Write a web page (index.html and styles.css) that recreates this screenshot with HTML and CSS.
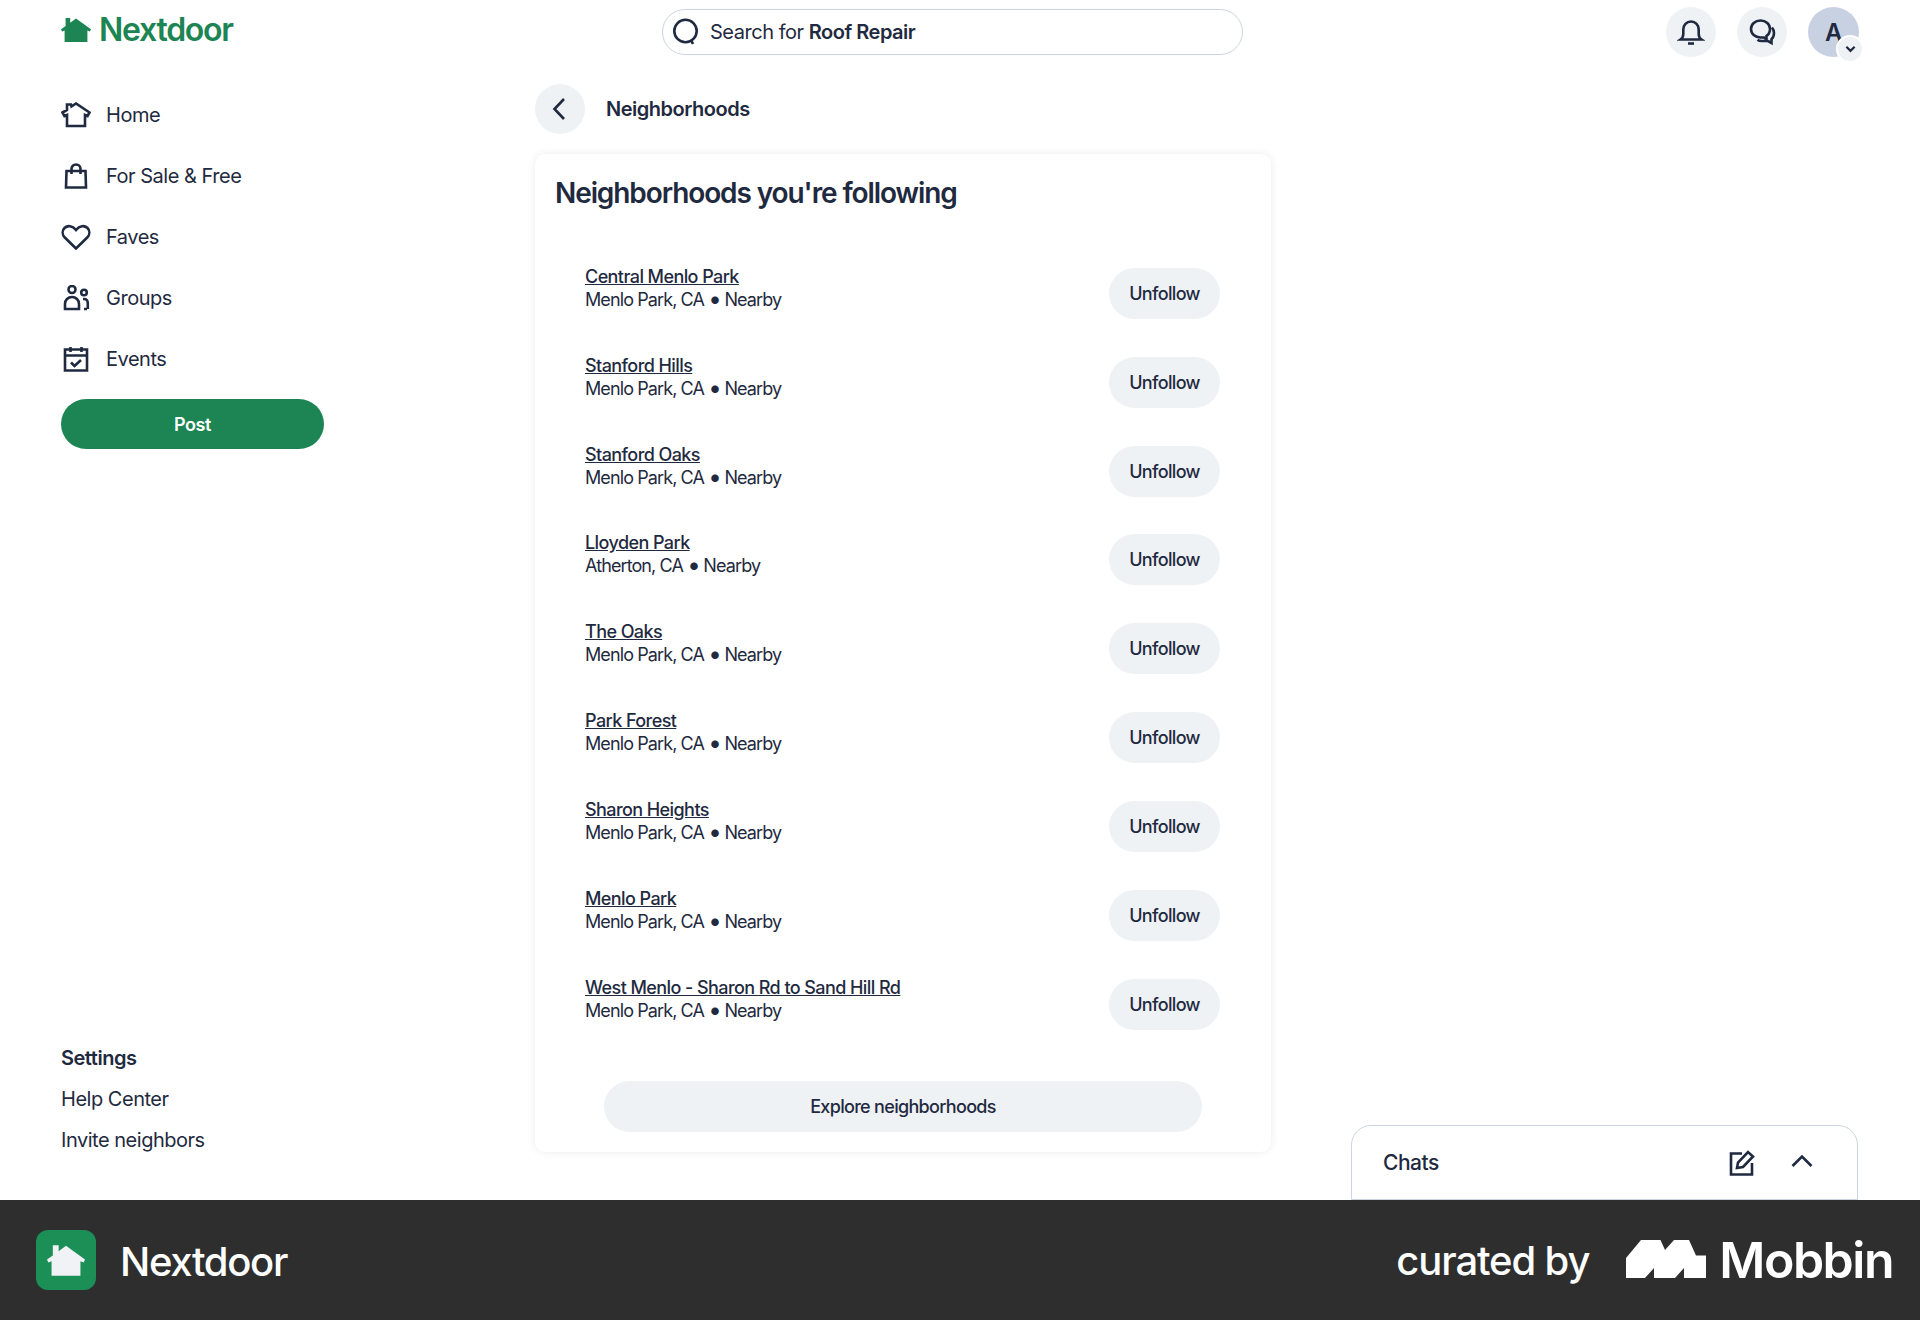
FILE: index.html
```html
<!DOCTYPE html>
<html lang="en">
<head>
<meta charset="utf-8">
<title>Nextdoor - Neighborhoods</title>
<link rel="stylesheet" href="styles.css">
</head>
<body>
<div class="app">
  <header class="topbar">
    <a class="logo">
      <svg class="logo-mark" viewBox="0 0 30 24"><path d="M0 11.200 4.600 8V0h4.600v4.700L15 .4 30 11.200l-1 2.300-2.600-1V24H3.600V12.500L1 13.500z"/></svg>
      <span>Nextdoor</span>
    </a>
    <div class="search">
      <svg class="search-icon" viewBox="0 0 28 28"><circle cx="13.500" cy="13" r="11.200"/><path d="m19 22 2 4"/></svg>
      <span>Search for <b>Roof Repair</b></span>
    </div>
    <div class="actions">
      <button class="round"><svg viewBox="0 0 28 28"><path d="M3.500 21.500c2-1.400 2.800-3 2.800-5.500v-4.500C6.300 6.900 9.500 3.500 14 3.500s7.700 3.400 7.700 8V16c0 2.500.8 4.100 2.800 5.500z"/><path d="M11 25.500h6"/></svg></button>
      <button class="round"><svg viewBox="0 0 28 28"><path d="M12.500 2.500C7 2.500 3 6.300 3 11s4 8.500 9.500 8.500H16l2.500 2v-3.600c2.200-1.500 3.500-4 3.500-6.900 0-4.700-4-8.500-9.500-8.500z"/><path d="M24 9.500c1.500 1.800 2 3.500 2 5.500 0 2.700-1 4.900-2.500 6.300v3.700l-3.500-2h-6.500c-1.500 0-3-.5-4-1.300"/></svg></button>
      <div class="avatar">A
        <span class="avatar-badge"><svg viewBox="0 0 12 8"><path d="m1.500 1.500 4.500 4.500 4.500-4.500"/></svg></span>
      </div>
    </div>
  </header>

  <div class="columns">
    <aside class="sidebar">
      <nav class="nav">
        <a class="nav-item"><svg viewBox="0 0 30 26"><path d="M1.500 10.500 6 8V2.500h4l.5 2L15 1.500l13.500 9-2 3.500-2.500-1v11H6v-11l-2.500 1z"/></svg>Home</a>
        <a class="nav-item"><svg viewBox="0 0 30 26"><path d="M5 24.500 5.500 8h19l.5 16.500z"/><path d="M10.500 11V6c0-2.800 2-4.500 4.500-4.500s4.500 1.700 4.500 4.500v5"/></svg>For Sale &amp; Free</a>
        <a class="nav-item"><svg viewBox="0 0 30 26"><path d="M15 24.500 3.800 13.500C1 10.500 1 6.500 3.500 4 6.500 1 11.500 1.500 15 6c3.500-4.500 8.500-5 11.500-2 2.500 2.500 2.500 6.500-.3 9.500z"/></svg>Faves</a>
        <a class="nav-item"><svg viewBox="0 0 30 26"><circle cx="11" cy="4.500" r="3.500"/><circle cx="23" cy="7.500" r="2.800"/><path d="M4 24v-5c0-4 3-7 7-7s7 3 7 7v5z"/><path d="M22 14h1c2.500 0 3.800 2 3.800 4.500V24M23 24h3"/></svg>Groups</a>
        <a class="nav-item"><svg viewBox="0 0 30 26"><path d="M4 3.500h22v21H4zM4 9.500h22M9.500 1v5M20.500 1v5"/><path d="m10 16.500 3.500 3.500 6.500-6"/></svg>Events</a>
      </nav>
      <button class="post">Post</button>
      <div class="side-links">
        <a class="settings">Settings</a>
        <a>Help Center</a>
        <a>Invite neighbors</a>
      </div>
    </aside>

    <main class="main">
      <div class="page-head">
        <button class="round back"><svg viewBox="0 0 28 28"><path d="m18 4-9.500 10 9.500 10"/></svg></button>
        <h2>Neighborhoods</h2>
      </div>
      <section class="card">
        <h1>Neighborhoods you're following</h1>
        <ul class="list">
          <li class="row"><div class="info"><a>Central Menlo Park</a><p>Menlo Park, CA <span class="dot">•</span> Nearby</p></div><button class="pill">Unfollow</button></li>
          <li class="row"><div class="info"><a>Stanford Hills</a><p>Menlo Park, CA <span class="dot">•</span> Nearby</p></div><button class="pill">Unfollow</button></li>
          <li class="row"><div class="info"><a>Stanford Oaks</a><p>Menlo Park, CA <span class="dot">•</span> Nearby</p></div><button class="pill">Unfollow</button></li>
          <li class="row"><div class="info"><a>Lloyden Park</a><p>Atherton, CA <span class="dot">•</span> Nearby</p></div><button class="pill">Unfollow</button></li>
          <li class="row"><div class="info"><a>The Oaks</a><p>Menlo Park, CA <span class="dot">•</span> Nearby</p></div><button class="pill">Unfollow</button></li>
          <li class="row"><div class="info"><a>Park Forest</a><p>Menlo Park, CA <span class="dot">•</span> Nearby</p></div><button class="pill">Unfollow</button></li>
          <li class="row"><div class="info"><a>Sharon Heights</a><p>Menlo Park, CA <span class="dot">•</span> Nearby</p></div><button class="pill">Unfollow</button></li>
          <li class="row"><div class="info"><a>Menlo Park</a><p>Menlo Park, CA <span class="dot">•</span> Nearby</p></div><button class="pill">Unfollow</button></li>
          <li class="row"><div class="info"><a>West Menlo - Sharon Rd to Sand Hill Rd</a><p>Menlo Park, CA <span class="dot">•</span> Nearby</p></div><button class="pill">Unfollow</button></li>
        </ul>
        <button class="pill explore">Explore neighborhoods</button>
      </section>
    </main>
  </div>

  <div class="chats">
    <span>Chats</span>
    <svg class="chat-edit" viewBox="0 0 26 26"><path d="M13 3.500H2v21h21V13"/><path d="m8 18 1-5.500L19 2l5 4.500L14 17z"/></svg>
    <svg class="chat-up" viewBox="0 0 22 14"><path d="m1.500 12 9.500-9.500 9.500 9.500"/></svg>
  </div>
</div>

<footer class="footer">
  <div class="brand">
    <span class="brand-icon"><svg viewBox="0 0 30 24"><path d="M0 11.200 4.600 8V0h4.600v4.700L15 .4 30 11.200l-1 2.300-2.600-1V24H3.600V12.500L1 13.500z"/></svg></span>
    <span class="brand-name">Nextdoor</span>
  </div>
  <div class="credit">
    <span class="curated">curated by</span>
    <svg class="mobbin-mark" viewBox="0 0 80 38"><path d="M0 38V18L15 0h19.500L39 10l9-10h15l7 15.500h10V38H58V28l-9 10H28V28l-9 10z"/></svg>
    <span class="mobbin">Mobbin</span>
  </div>
</footer>
</body>
</html>
```

FILE: styles.css
```css
* { box-sizing: border-box; }
html, body { margin: 0; padding: 0; }
body {
  width: 1920px;
  height: 1320px;
  overflow: hidden;
  background: #fff;
  color: #1f2a40;
  font-family: Inter, "Liberation Sans", sans-serif;
  letter-spacing: -0.03em;
}
a { color: inherit; text-decoration: none; }
button { font: inherit; letter-spacing: inherit; color: inherit; border: 0; cursor: pointer; }
h1, h2, p, ul { margin: 0; padding: 0; }
ul { list-style: none; }
svg { display: block; fill: none; stroke: currentColor; stroke-width: 2.6; }

.app { position: relative; height: 1200px; overflow: hidden; }

.topbar {
  display: grid;
  grid-template-columns: 662px 581px 1fr;
  height: 64px;
  align-items: start;
}
.logo {
  display: flex;
  align-items: center;
  gap: 8px;
  margin: 14px 0 0 61px;
  color: #1c8553;
  font-size: 32px;
  font-weight: 600;
  letter-spacing: -0.04em;
  line-height: 32px;
}
.logo-mark { width: 30px; height: 24px; fill: #1c8553; stroke: none; }

.search {
  display: flex;
  align-items: center;
  gap: 10px;
  height: 46px;
  margin-top: 9px;
  padding-left: 9px;
  border: 1.5px solid #cdd3e2;
  border-radius: 23px;
  font-size: 20px;
}
.search b { font-weight: 600; }
.search-icon { width: 28px; height: 28px; }

.actions {
  display: flex;
  justify-content: flex-end;
  gap: 21px;
  margin: 7px 61px 0 0;
}
.round {
  display: flex;
  align-items: center;
  justify-content: center;
  width: 50px;
  height: 50px;
  padding: 0;
  border-radius: 50%;
  background: #eff2f5;
}
.round svg { width: 28px; height: 28px; }
.avatar {
  position: relative;
  display: flex;
  align-items: center;
  justify-content: center;
  width: 51px;
  height: 50px;
  border-radius: 50%;
  background: #c8d1e2;
  font-size: 24px;
  font-weight: 600;
}
.avatar-badge {
  position: absolute;
  right: -5px;
  bottom: -6px;
  display: flex;
  align-items: center;
  justify-content: center;
  width: 28px;
  height: 28px;
  border-radius: 50%;
  background: #eff2f5;
  border: 2px solid #fff;
}
.avatar-badge svg { width: 11px; height: 8px; stroke-width: 2.4; }

.columns { display: flex; height: 1136px; }
.sidebar {
  display: flex;
  flex-direction: column;
  width: 535px;
  padding: 20px 0 47px 61px;
}
.nav { display: flex; flex-direction: column; }
.nav-item {
  display: flex;
  align-items: center;
  gap: 15px;
  height: 61px;
  font-size: 20px;
  font-weight: 400;
}
.nav-item svg { width: 30px; height: 26px; flex: none; }
.post {
  width: 263px;
  height: 50px;
  margin-top: 10px;
  border-radius: 25px;
  background: #1c8553;
  color: #fff;
  font-size: 18px;
  font-weight: 600;
}
.side-links {
  display: flex;
  flex-direction: column;
  gap: 16px;
  margin-top: auto;
  font-size: 20px;
  line-height: 25px;
}
.settings { font-weight: 600; }

.main { width: 736px; }
.page-head {
  display: flex;
  align-items: center;
  gap: 21px;
  height: 50px;
  margin: 20px 0;
}
.page-head h2 { font-size: 20px; font-weight: 600; }

.card {
  height: 998px;
  padding: 22px 20px 0;
  border-radius: 10px;
  background: #fff;
  box-shadow: 0 0 8px rgba(32, 44, 70, 0.09);
}
.card h1 { font-size: 28px; line-height: 34px; font-weight: 600; letter-spacing: -0.039em; }
.list { margin-top: 39px; }
.row {
  display: flex;
  align-items: center;
  justify-content: space-between;
  height: 88.85px;
  padding: 0 31px 0 30px;
  font-size: 18px;
  line-height: 23px;
}
.info { margin-bottom: 11px; }
.row a { font-weight: 500; text-decoration: underline; letter-spacing: -0.032em; }
.row p { letter-spacing: -0.05em; }
.dot { font-size: 24px; line-height: 0; letter-spacing: -0.06em; vertical-align: -1px; }
.pill {
  width: 111px;
  height: 51px;
  padding: 0;
  border-radius: 26px;
  background: #eff2f5;
  font-size: 18px;
  font-weight: 500;
  letter-spacing: -0.037em;
}
.explore {
  display: block;
  width: 598px;
  margin: 32px auto 0 49px;
  letter-spacing: -0.038em;
}

.chats {
  position: absolute;
  left: 1351px;
  top: 1125px;
  display: flex;
  align-items: center;
  width: 507px;
  height: 75px;
  padding: 0 44px 0 31px;
  border: 1.5px solid #cdd3e2;
  border-radius: 20px 20px 0 0;
  background: #fff;
  font-size: 21px;
  font-weight: 500;
}
.chats span { margin-right: auto; }
.chat-edit { width: 26px; height: 26px; margin-right: 36px; }
.chat-up { width: 22px; height: 14px; margin-bottom: 4px; }

.footer {
  display: flex;
  align-items: center;
  justify-content: space-between;
  height: 120px;
  padding: 0 27px 0 36px;
  background: #2e2e2e;
  color: #fff;
}
.brand { display: flex; align-items: center; gap: 24px; font-size: 40px; font-weight: 500; letter-spacing: -0.033em; }
.brand-name { padding-top: 2px; }
.brand-icon {
  display: flex;
  align-items: center;
  justify-content: center;
  width: 60px;
  height: 60px;
  border-radius: 12px;
  background: #1c8f57;
}
.brand-icon svg { width: 38px; height: 31px; fill: #f0f2f5; stroke: none; }
.credit { display: flex; align-items: center; }
.curated { font-size: 40px; font-weight: 500; letter-spacing: -0.028em; margin-right: 37px; }
.mobbin-mark { width: 80px; height: 38px; fill: #fff; stroke: none; margin: 0 13px 2px 0; }
.mobbin { font-size: 50px; font-weight: 600; letter-spacing: -0.03em; }
```
